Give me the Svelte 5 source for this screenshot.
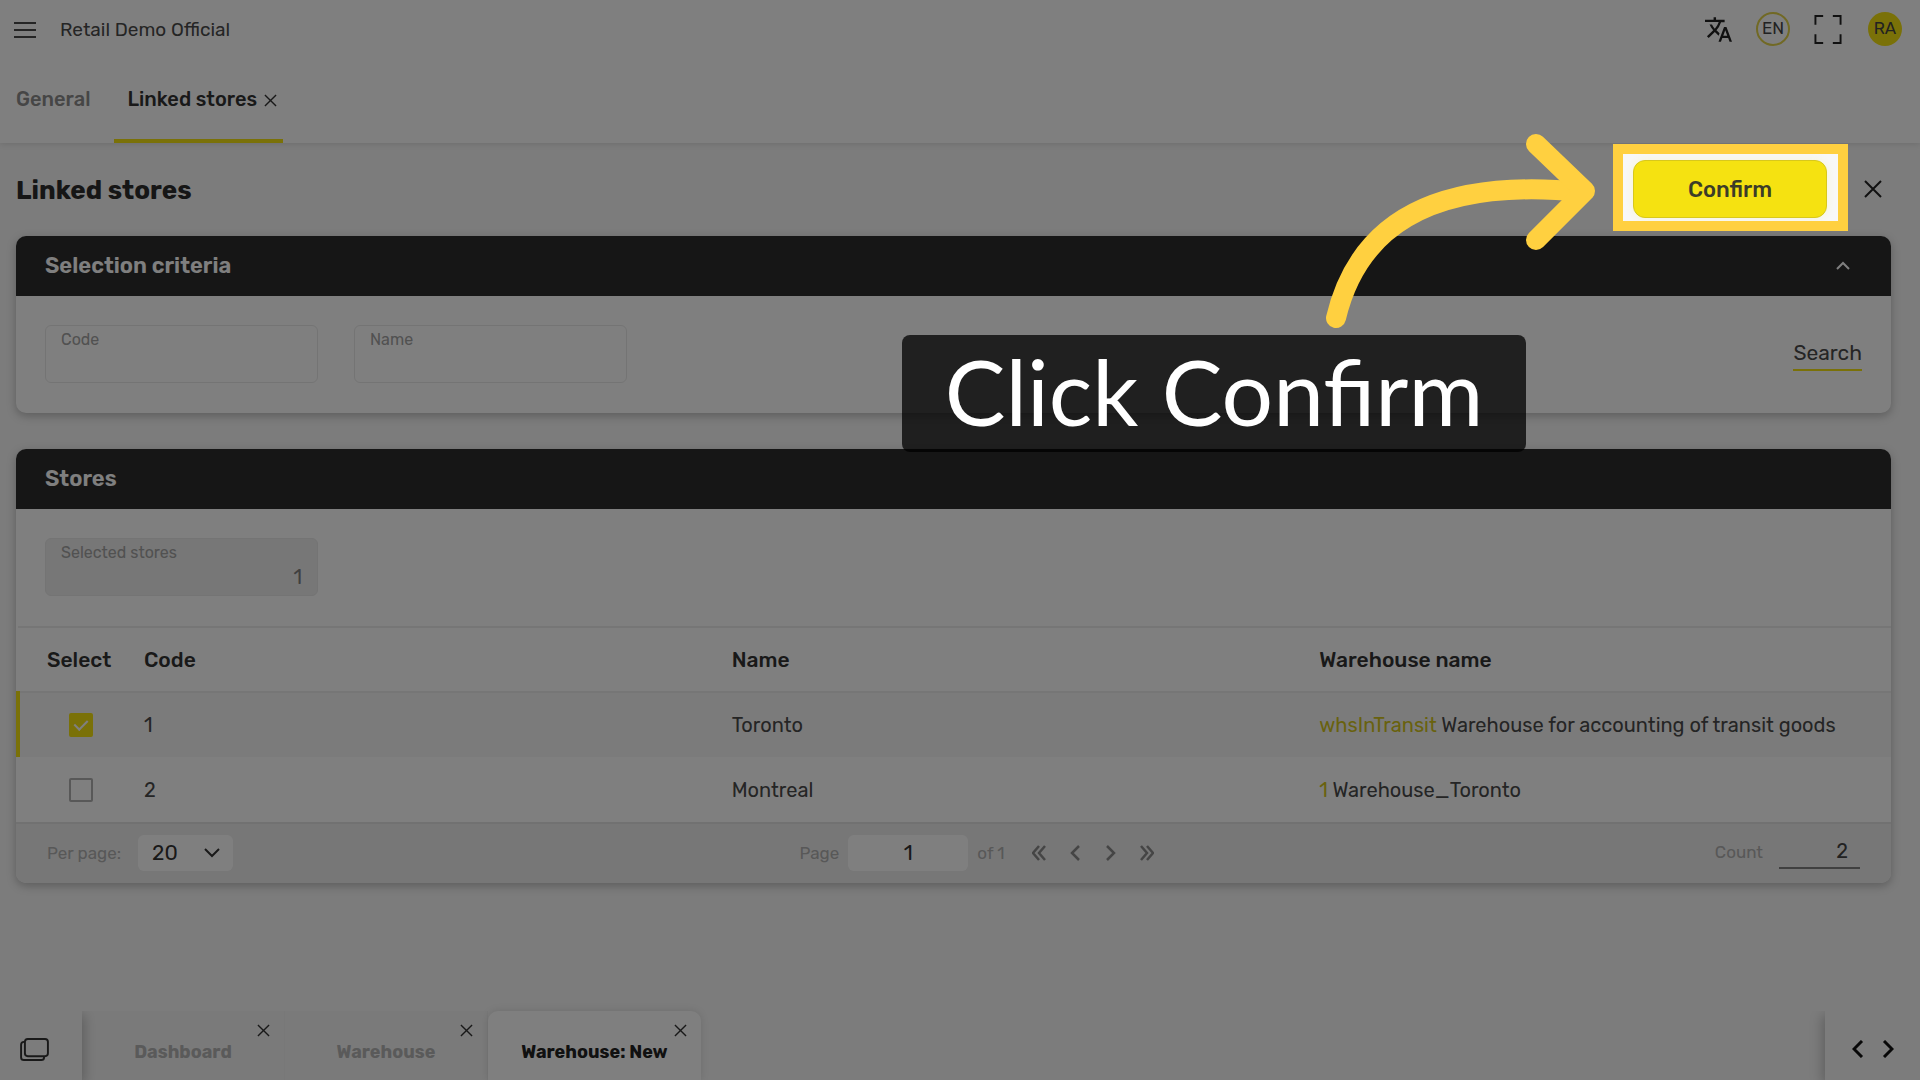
<script>
  /**
   * Linked stores screen with a guided tour step over the Confirm button.
   */

  let code = $state('');
  let name = $state('');
  let perPage = $state('20');
  let page = $state('1');
  let expanded = $state(true);

  let stores = $state([
    {
      code: '1',
      name: 'Toronto',
      warehouse: { id: 'whsInTransit', name: 'Warehouse for accounting of transit goods' },
      selected: true
    },
    {
      code: '2',
      name: 'Montreal',
      warehouse: { id: '1', name: 'Warehouse_Toronto' },
      selected: false
    }
  ]);

  const selectedCount = $derived(stores.filter((s) => s.selected).length);

  const windows = [
    { title: 'Dashboard', active: false },
    { title: 'Warehouse', active: false },
    { title: 'Warehouse: New', active: true }
  ];
</script>

{#snippet cross(size)}
  <svg width={size} height={size} viewBox="0 0 14 14" fill="none" stroke="currentColor" stroke-width="1.5" aria-hidden="true">
    <path d="M1 1l12 12M13 1L1 13" />
  </svg>
{/snippet}

<div class="app">
  <header class="header">
    <div class="topbar">
      <button class="icon-btn" aria-label="Menu">
        <svg width="22" height="18" viewBox="0 0 22 18" stroke="currentColor" stroke-width="2">
          <path d="M0 2h22M0 9h22M0 16h22" />
        </svg>
      </button>
      <span class="company">Retail Demo Official</span>
      <div class="topbar-actions">
        <button class="icon-btn" aria-label="Translate">
          <svg width="27" height="27" viewBox="1 1 22 22" fill="currentColor">
            <path
              d="M12.87 15.07l-2.54-2.51.03-.03A17.52 17.52 0 0 0 14.07 6H17V4h-7V2H8v2H1v1.99h11.17C11.5 7.92 10.44 9.75 9 11.35 8.07 10.32 7.3 9.19 6.69 8h-2c.73 1.63 1.73 3.17 2.98 4.56l-5.09 5.02L4 19l5-5 3.11 3.11.76-2.04zM18.5 10h-2L12 22h2l1.12-3h4.75L21 22h2l-4.5-12zm-2.62 7l1.62-4.33L19.12 17h-3.24z"
            />
          </svg>
        </button>
        <button class="badge badge-outline">EN</button>
        <button class="icon-btn" aria-label="Full screen">
          <svg width="28" height="29" viewBox="0 0 28 30" fill="none" stroke="currentColor" stroke-width="2">
            <path d="M1 10V1h8M19 1h8v9M27 20v9h-8M9 29H1v-9" />
          </svg>
        </button>
        <button class="badge badge-solid">RA</button>
      </div>
    </div>
    <nav class="tabs">
      <div class="tab">
        <button class="tab-label">General</button>
      </div>
      <div class="tab active">
        <button class="tab-label">Linked stores</button>
        <button class="icon-btn tab-close" aria-label="Close tab">{@render cross(13)}</button>
      </div>
    </nav>
  </header>

  <main class="content">
    <div class="title-row">
      <h1>Linked stores</h1>
      <div class="step">
        <button class="confirm">Confirm</button>
        <div class="spotlight"></div>
        <svg class="arrow" width="300" height="220" viewBox="0 0 300 220" fill="none" stroke="#ffd040" stroke-width="20" stroke-linecap="round" stroke-linejoin="round" aria-hidden="true">
          <path d="M26 198C46 114 112 56 272 72" />
          <path d="M226 24l49 47-49 49" />
        </svg>
        <div class="callout">Click Confirm</div>
      </div>
      <button class="icon-btn page-close" aria-label="Close">
        <svg width="18" height="18" viewBox="0 0 18 18" stroke="currentColor" stroke-width="2">
          <path d="M1 1l16 16M17 1L1 17" />
        </svg>
      </button>
    </div>

    <section class="panel">
      <div class="panel-head">
        <h2>Selection criteria</h2>
        <button class="icon-btn" aria-label="Collapse" onclick={() => (expanded = !expanded)}>
          <svg width="14" height="10" viewBox="0 0 14 10" fill="none" stroke="currentColor" stroke-width="2">
            <path d="M1 8l6-6 6 6" />
          </svg>
        </button>
      </div>
      {#if expanded}
        <div class="panel-body criteria">
          <div class="field">
            <label for="code">Code</label>
            <input id="code" type="text" bind:value={code} />
          </div>
          <div class="field">
            <label for="name">Name</label>
            <input id="name" type="text" bind:value={name} />
          </div>
          <button class="search">Search</button>
        </div>
      {/if}
    </section>

    <section class="panel">
      <div class="panel-head">
        <h2>Stores</h2>
      </div>
      <div class="panel-body">
        <div class="field readonly">
          <label for="selected">Selected stores</label>
          <input id="selected" type="text" value={selectedCount} readonly />
        </div>
      </div>
      <table>
        <thead>
          <tr>
            <th class="col-select">Select</th>
            <th>Code</th>
            <th>Name</th>
            <th>Warehouse name</th>
          </tr>
        </thead>
        <tbody>
          {#each stores as store (store.code)}
            <tr class:selected={store.selected}>
              <td class="col-check">
                <input type="checkbox" aria-label="Select {store.name}" bind:checked={store.selected} />
              </td>
              <td>{store.code}</td>
              <td>{store.name}</td>
              <td><a href="#warehouse">{store.warehouse.id}</a> {store.warehouse.name}</td>
            </tr>
          {/each}
        </tbody>
      </table>
      <div class="pager">
        <div class="pager-group">
          <label for="per-page">Per page:</label>
          <div class="select">
            <select id="per-page" bind:value={perPage}>
              <option>20</option>
              <option>50</option>
              <option>100</option>
            </select>
            <svg width="16" height="10" viewBox="0 0 16 10" fill="none" stroke="currentColor" stroke-width="2" aria-hidden="true">
              <path d="M1 1l7 7 7-7" />
            </svg>
          </div>
        </div>
        <div class="pager-group pages">
          <label for="page">Page</label>
          <input id="page" type="text" bind:value={page} />
          <span>of 1</span>
          <div class="pager-nav">
            <button class="icon-btn" aria-label="First page">
              <svg width="14" height="16" viewBox="0 0 14 16"><path d="M7 1L1 8l6 7M13 1L7 8l6 7" /></svg>
            </button>
            <button class="icon-btn" aria-label="Previous page">
              <svg width="14" height="16" viewBox="0 0 14 16"><path d="M11 1L4 8l7 7" /></svg>
            </button>
            <button class="icon-btn" aria-label="Next page">
              <svg width="14" height="16" viewBox="0 0 14 16"><path d="M3 1l7 7-7 7" /></svg>
            </button>
            <button class="icon-btn" aria-label="Last page">
              <svg width="14" height="16" viewBox="0 0 14 16"><path d="M1 1l6 7-6 7M7 1l6 7-6 7" /></svg>
            </button>
          </div>
        </div>
        <div class="pager-group count">
          <label for="count">Count</label>
          <input id="count" type="text" value={stores.length} readonly />
        </div>
      </div>
    </section>
  </main>

  <footer class="taskbar">
    <button class="windows-btn" aria-label="Windows">
      <svg width="29" height="23" viewBox="0 0 30 24" fill="none" stroke="currentColor" stroke-width="2">
        <rect x="5" y="1" width="24" height="18" rx="3" />
        <path d="M5 4H4a3 3 0 0 0-3 3v13a3 3 0 0 0 3 3h18a3 3 0 0 0 3-3v-1" />
      </svg>
    </button>
    {#each windows as win}
      <div class="window" class:active={win.active}>
        <button class="window-title">{win.title}</button>
        <button class="icon-btn window-close" aria-label="Close {win.title}">{@render cross(13)}</button>
      </div>
    {/each}
    <div class="taskbar-nav">
      <button class="icon-btn" aria-label="Scroll left">
        <svg width="12" height="18" viewBox="0 0 12 18" fill="none" stroke="currentColor" stroke-width="3"><path d="M10 1L2 9l8 8" /></svg>
      </button>
      <button class="icon-btn" aria-label="Scroll right">
        <svg width="12" height="18" viewBox="0 0 12 18" fill="none" stroke="currentColor" stroke-width="3"><path d="M2 1l8 8-8 8" /></svg>
      </button>
    </div>
  </footer>
</div>

<style>
  :global(body) {
    margin: 0;
    background: #f8f8f8;
  }

  .app {
    --yellow: #f5e211;
    --dark: #2d2d2d;
    --line: #ececec;
    --muted: #a2a2a2;

    min-height: 100vh;
    display: flex;
    flex-direction: column;
    overflow: hidden;
    background: #f8f8f8;
    color: #4a4a4a;
    font-family: Rubik, Roboto, 'Liberation Sans', sans-serif;
    font-size: 20px;
    line-height: 24px;
  }

  .app * {
    box-sizing: border-box;
  }

  button,
  input,
  select {
    font: inherit;
    color: inherit;
    border: 0;
    padding: 0;
    margin: 0;
    background: none;
  }

  button {
    cursor: pointer;
  }

  .icon-btn {
    display: flex;
    align-items: center;
    justify-content: center;
  }

  /* Header */
  .header {
    background: #fff;
    box-shadow: 0 1px 6px rgba(0, 0, 0, 0.12);
  }

  .topbar {
    display: flex;
    align-items: center;
    height: 60px;
    padding: 0 18px 0 14px;
  }

  .company {
    margin-left: 24px;
    font-size: 19px;
  }

  .topbar-actions {
    display: flex;
    align-items: center;
    gap: 24px;
    margin-left: auto;
    padding-bottom: 2px;
    color: #222;
  }

  .badge {
    width: 34px;
    height: 34px;
    padding-bottom: 2px;
    border-radius: 50%;
    font-size: 17px;
    line-height: 24px;
    color: #444;
  }

  .badge-outline {
    border: 2px solid #e2d34a;
  }

  .badge-solid {
    background: var(--yellow);
    margin-left: 2px;
  }

  .tabs {
    display: flex;
    gap: 12px;
    height: 83px;
    padding-left: 3px;
  }

  .tab {
    display: flex;
    align-items: center;
    gap: 7px;
    padding: 0 6px 2px 13px;
    border-bottom: 4px solid transparent;
    color: #8c8c8c;
    font-weight: 500;
  }

  .tab.active {
    border-color: var(--yellow);
    color: #333;
  }

  .tab:first-child {
    padding-right: 12px;
  }

  .tab-close {
    padding-top: 4px;
  }

  /* Page */
  .content {
    flex: 1;
    padding: 17px 29px 0 16px;
  }

  .title-row {
    display: flex;
    align-items: center;
    margin-bottom: 18px;
  }

  h1 {
    margin: 0;
    padding-top: 4px;
    font-size: 26px;
    line-height: 32px;
    font-weight: 700;
    color: #2d2d2d;
  }

  .step {
    position: relative;
    z-index: 10;
    margin-left: auto;
    background: #f8f8f8;
  }

  .confirm {
    width: 194px;
    height: 58px;
    padding-top: 2px;
    border: 1px solid #d8c81c;
    border-radius: 12px;
    background: var(--yellow);
    box-shadow: 0 0 10px rgba(245, 226, 17, 0.15);
    color: #3c3c28;
    font-size: 22px;
    font-weight: 500;
  }

  .page-close {
    margin: 0 9px 0 37px;
    color: #222;
  }

  /* Tour step: everything outside the frame is dimmed */
  .spotlight {
    position: absolute;
    inset: -16px -21px -13px -20px;
    border: 10px solid #ffd040;
    box-shadow: 0 0 0 4000px rgba(0, 0, 0, 0.5);
    pointer-events: none;
  }

  .arrow {
    position: absolute;
    top: -40px;
    right: 217px;
    pointer-events: none;
  }

  .callout {
    position: absolute;
    top: 175px;
    right: 301px;
    width: 624px;
    padding: 2px 0 7px;
    border-radius: 8px;
    background: rgba(0, 0, 0, 0.75);
    color: #fff;
    font-family: Lato, sans-serif;
    font-size: 91px;
    line-height: 108px;
    text-align: center;
    white-space: nowrap;
  }

  /* Panels */
  .panel {
    margin-bottom: 36px;
    border-radius: 10px;
    overflow: hidden;
    background: #fff;
    box-shadow: 0 3px 10px rgba(0, 0, 0, 0.25);
  }

  .panel-head {
    display: flex;
    align-items: center;
    justify-content: space-between;
    height: 60px;
    padding: 0 41px 0 29px;
    background: var(--dark);
    color: #fff;
  }

  h2 {
    margin: 0;
    font-size: 22px;
    line-height: 24px;
    font-weight: 600;
  }

  .panel-body {
    padding: 29px 29px 30px;
  }

  .criteria {
    display: flex;
    align-items: center;
    gap: 36px;
  }

  .field {
    display: flex;
    flex-direction: column;
    width: 273px;
    height: 58px;
    padding: 4px 15px;
    border: 1px solid #e8e8e8;
    border-radius: 6px;
  }

  .field label {
    font-size: 16px;
    line-height: 20px;
    color: var(--muted);
  }

  .field input {
    width: 100%;
    min-height: 28px;
    outline: 0;
  }

  .field.readonly {
    background: #eee;
  }

  .field.readonly input {
    text-align: right;
    color: #808080;
  }

  .search {
    margin-left: auto;
    padding: 4px 0;
    border-bottom: 2px solid var(--yellow);
    font-size: 21px;
  }

  /* Table */
  table {
    width: 100%;
    border-collapse: collapse;
    table-layout: fixed;
  }

  th,
  td {
    height: 65px;
    padding: 0 16px;
    text-align: left;
  }

  th {
    border-top: 2px solid var(--line);
    border-bottom: 2px solid var(--line);
    font-weight: 500;
    font-size: 21px;
    color: #333;
  }

  .col-select {
    width: 110px;
    padding: 0 0 0 29px;
  }

  .col-check {
    padding: 0 0 0 49px;
    border-left: 4px solid transparent;
  }

  tr.selected {
    background: #f7f7f7;
  }

  tr.selected .col-check {
    border-color: var(--yellow);
  }

  td a {
    color: #d2c41c;
    text-decoration: none;
  }

  input[type='checkbox'] {
    display: block;
    appearance: none;
    width: 24px;
    height: 24px;
    border: 2px solid #b0b0b0;
    border-radius: 2px;
  }

  input[type='checkbox']:checked {
    border-color: var(--yellow);
    background: var(--yellow);
  }

  input[type='checkbox']:checked::after {
    content: '';
    display: block;
    width: 6px;
    height: 11px;
    margin: 2px auto;
    border: solid #fff;
    border-width: 0 2px 2px 0;
    transform: rotate(45deg);
  }

  /* Pager */
  .pager {
    display: grid;
    grid-template-columns: 1fr auto 1fr;
    align-items: center;
    height: 61px;
    padding: 0 31px 2px;
    border-top: 2px solid #e2e2e2;
    background: #eee;
    color: #b0b0b0;
    font-size: 17px;
  }

  .pager-group {
    display: flex;
    align-items: center;
    gap: 9px;
  }

  .pager-group:first-child {
    gap: 17px;
  }

  .pages {
    padding-left: 46px;
  }

  .select {
    position: relative;
    width: 95px;
    height: 36px;
    color: #333;
  }

  select {
    width: 100%;
    height: 100%;
    padding-left: 14px;
    appearance: none;
    border-radius: 6px;
    background: #fff;
    font-size: 21px;
  }

  .select svg {
    position: absolute;
    top: 13px;
    right: 13px;
    pointer-events: none;
  }

  #page {
    width: 120px;
    height: 36px;
    border-radius: 6px;
    background: #fff;
    color: #333;
    font-size: 21px;
    text-align: center;
  }

  .pager-nav {
    display: flex;
    gap: 22px;
    margin-left: 18px;
    color: #8a8a8a;
  }

  .pager-nav svg {
    fill: none;
    stroke: currentColor;
    stroke-width: 2.5;
  }

  .count {
    justify-content: flex-end;
    gap: 16px;
    padding-bottom: 2px;
  }

  #count {
    width: 81px;
    height: 34px;
    padding-right: 12px;
    border-bottom: 2px solid #808080;
    color: #444;
    font-size: 20px;
    text-align: right;
  }

  /* Taskbar */
  .taskbar {
    display: flex;
    height: 69px;
    font-size: 18px;
    font-weight: 700;
  }

  .windows-btn {
    position: relative;
    z-index: 1;
    width: 82px;
    padding: 13px 14px 0 0;
    background: #f8f8f8;
    color: #333;
    box-shadow: 2px 4px 12px rgba(0, 0, 0, 0.25);
    clip-path: inset(0 -20px 0 0);
  }

  .window {
    position: relative;
    width: 203px;
    padding: 13px 0 0;
    border-right: 1px solid #f0f0f0;
    background: #f5f5f5;
    color: #b4b4b4;
    text-align: center;
  }

  .window.active {
    width: 213px;
    border: 0;
    border-radius: 10px 10px 0 0;
    background: #fff;
    color: #222;
    box-shadow: 0 0 8px rgba(0, 0, 0, 0.12);
  }

  .window-title {
    width: 100%;
    height: 55px;
  }

  .window-close {
    position: absolute;
    top: 13px;
    right: 14px;
    color: #333;
  }

  .taskbar-nav {
    display: flex;
    align-items: center;
    gap: 18px;
    margin-left: auto;
    padding: 6px 26px 0 27px;
    color: #111;
    box-shadow: -2px 4px 12px rgba(0, 0, 0, 0.25);
    clip-path: inset(0 0 0 -20px);
  }
</style>
